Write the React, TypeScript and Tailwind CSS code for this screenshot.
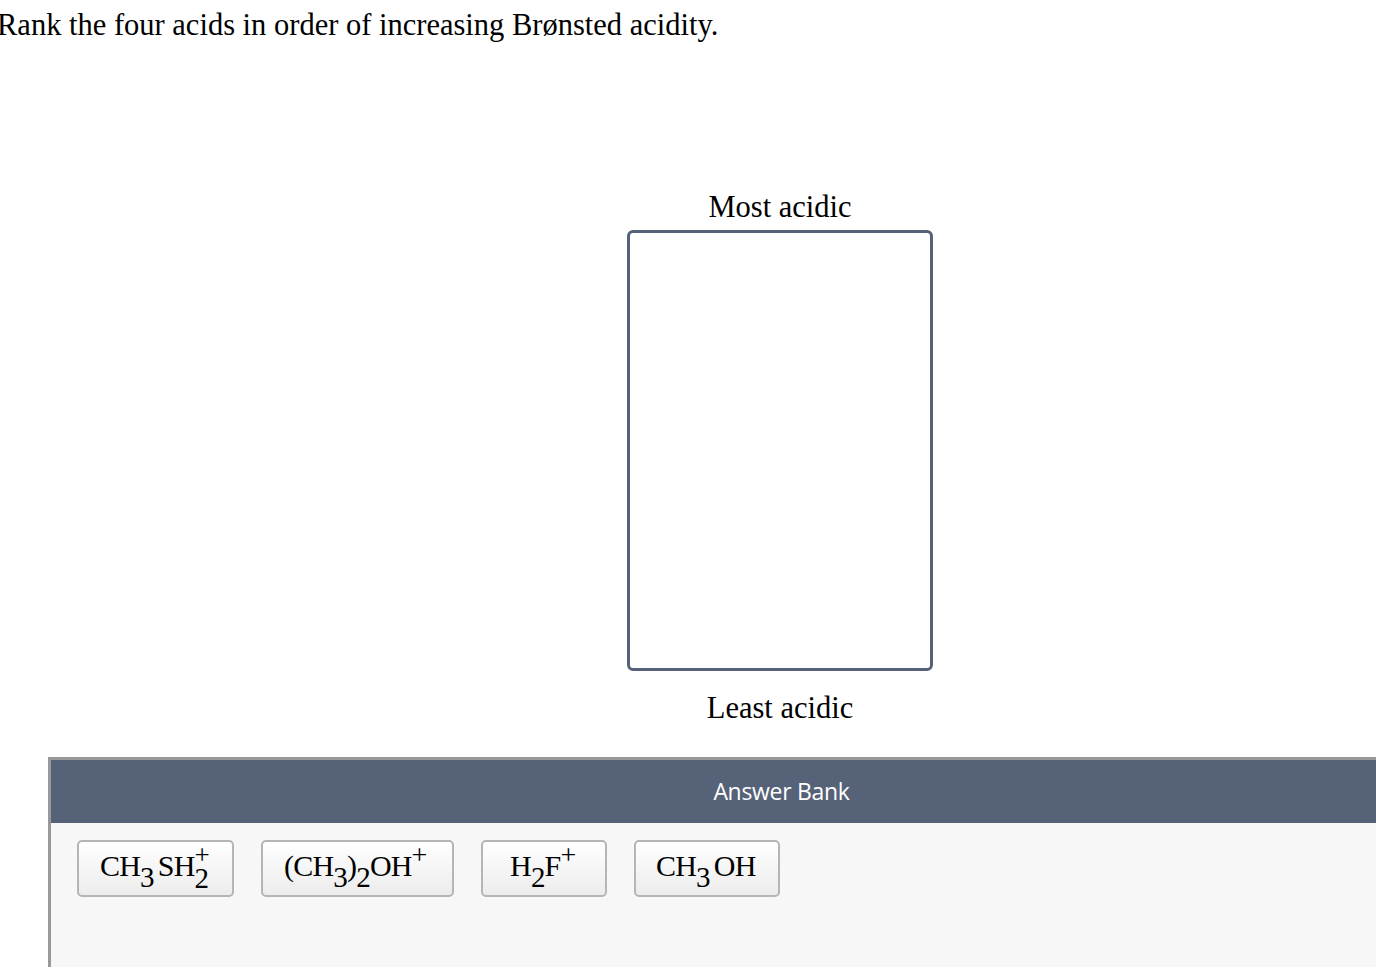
import React from 'react';

const serif = { fontFamily: '"Liberation Serif", "Times New Roman", serif' };

const Sub: React.FC<{ children: React.ReactNode }> = ({ children }) => (
  <span className="relative top-[12px] text-[29px] leading-none">{children}</span>
);

const Sup: React.FC<{ children: React.ReactNode }> = ({ children }) => (
  <span className="relative -top-[11px] text-[28px] leading-none">{children}</span>
);

// "+" set over the subscript 2, as in CH3SH2+
const SubSup: React.FC<{ sub: string; sup: string }> = ({ sub, sup }) => (
  <span className="relative inline-block">
    <Sub>{sub}</Sub>
    <span className="absolute left-0 top-[-1px] text-[27px] leading-none">{sup}</span>
  </span>
);

const Chip: React.FC<{ w: string; children: React.ReactNode }> = ({ w, children }) => (
  <div
    className={`${w} h-[57px] pb-[6px] flex items-center rounded-[5px] border-2 border-[#b5b5b5] bg-gradient-to-b from-white to-[#ececec] text-[30px] tracking-[-0.8px] text-black whitespace-nowrap`}
  >
    {children}
  </div>
);

export default function App() {
  return (
    <div className="min-h-[968px] bg-white overflow-hidden" style={serif}>
      <h1 className="ml-[-3px] pt-[7px] text-[30.5px] leading-[36px] text-black font-normal whitespace-nowrap">
        Rank the four acids in order of increasing Brønsted acidity.
      </h1>

      <div className="w-[1464px] ml-[48px] mt-[146px] flex flex-col items-center">
        <div className="text-[30.5px] leading-[36px] text-black">Most acidic</div>
        <div className="mt-[5px] w-[306px] h-[441px] rounded-[6px] border-[3px] border-[#556278] bg-white" />
        <div className="mt-[19px] text-[30.5px] leading-[36px] text-black">Least acidic</div>
      </div>

      <div className="mt-[31px] ml-[48px] w-[1464px] border-l-[3px] border-t-[3px] border-[#999999] bg-[#f7f7f7] min-h-[210px]">
        <div
          className="h-[63px] bg-[#556278] flex items-center justify-center text-white text-[23px]"
          style={{ fontFamily: '"Open Sans", "Noto Sans", sans-serif' }}
        >
          <span className="tracking-[-0.3px]">Answer Bank</span>
        </div>
        <div className="flex gap-[27px] pl-[26px] pt-[17px]">
          <Chip w="w-[157px] pl-[21px]">
            CH<Sub>3</Sub>
            <span className="ml-[4px]">SH</span>
            <SubSup sub="2" sup="+" />
          </Chip>
          <Chip w="w-[193px] pl-[21px]">
            (CH<Sub>3</Sub>)<Sub>2</Sub>OH<Sup>+</Sup>
          </Chip>
          <Chip w="w-[126px] pl-[27px]">
            H<Sub>2</Sub>F<Sup>+</Sup>
          </Chip>
          <Chip w="w-[146px] pl-[20px]">
            CH<Sub>3</Sub>
            <span className="ml-[4px]">OH</span>
          </Chip>
        </div>
      </div>
    </div>
  );
}
